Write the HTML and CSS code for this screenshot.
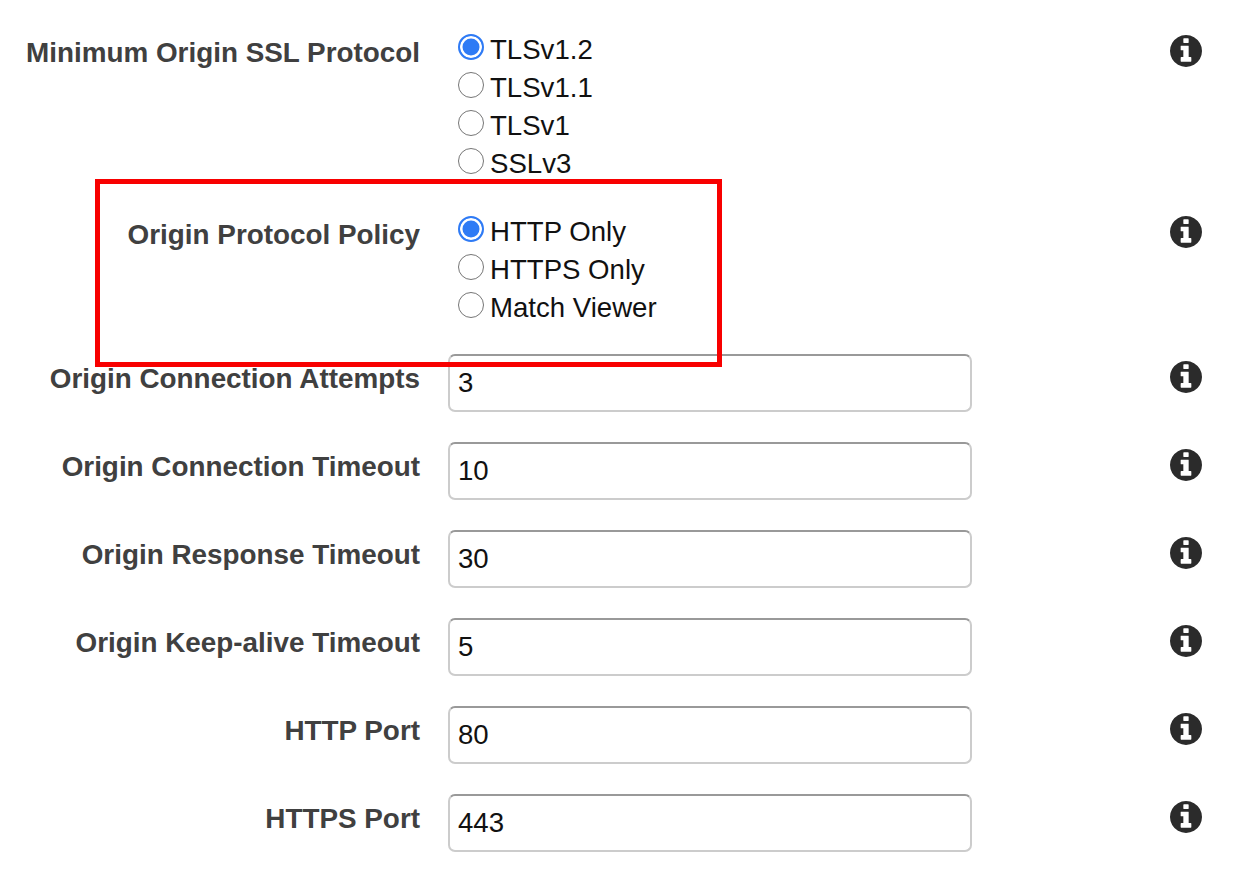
FILE: index.html
```html
<!DOCTYPE html>
<html lang="en">
<head>
	<meta charset="UTF-8">
	<title>Origin Settings</title>
	<link rel="stylesheet" href="styles.css">
</head>
<body>
	<svg class="defs" width="0" height="0">
		<symbol id="info" viewBox="128 128 1536 1536">
			<path d="M1152 1376v-160q0-14-9-23t-23-9h-96v-512q0-14-9-23t-23-9h-320q-14 0-23 9t-9 23v160q0 14 9 23t23 9h96v320h-96q-14 0-23 9t-9 23v160q0 14 9 23t23 9h448q14 0 23-9t9-23zm-128-896v-160q0-14-9-23t-23-9h-192q-14 0-23 9t-9 23v160q0 14 9 23t23 9h192q14 0 23-9t9-23zm640 416q0 209-103 385.5t-279.5 279.5-385.5 103-385.5-103-279.5-279.5-103-385.5 103-385.5 279.5-279.5 385.5-103 385.5 103 279.5 279.5 103 385.5z"/>
		</symbol>
	</svg>

	<form class="settings">
		<div class="row radio-row first">
			<label class="name">Minimum Origin SSL Protocol</label>
			<div class="options">
				<label class="option"><input type="radio" name="ssl" checked>TLSv1.2</label>
				<label class="option"><input type="radio" name="ssl">TLSv1.1</label>
				<label class="option"><input type="radio" name="ssl">TLSv1</label>
				<label class="option"><input type="radio" name="ssl">SSLv3</label>
			</div>
			<svg class="info"><use href="#info"></use></svg>
		</div>
		<div class="row radio-row">
			<label class="name">Origin Protocol Policy</label>
			<div class="options">
				<label class="option"><input type="radio" name="policy" checked>HTTP Only</label>
				<label class="option"><input type="radio" name="policy">HTTPS Only</label>
				<label class="option"><input type="radio" name="policy">Match Viewer</label>
			</div>
			<svg class="info"><use href="#info"></use></svg>
		</div>
		<div class="row input-row">
			<label class="name">Origin Connection Attempts</label>
			<input class="field" type="text" value="3">
			<svg class="info"><use href="#info"></use></svg>
		</div>
		<div class="row input-row">
			<label class="name">Origin Connection Timeout</label>
			<input class="field" type="text" value="10">
			<svg class="info"><use href="#info"></use></svg>
		</div>
		<div class="row input-row">
			<label class="name">Origin Response Timeout</label>
			<input class="field" type="text" value="30">
			<svg class="info"><use href="#info"></use></svg>
		</div>
		<div class="row input-row">
			<label class="name">Origin Keep-alive Timeout</label>
			<input class="field" type="text" value="5">
			<svg class="info"><use href="#info"></use></svg>
		</div>
		<div class="row input-row">
			<label class="name">HTTP Port</label>
			<input class="field" type="text" value="80">
			<svg class="info"><use href="#info"></use></svg>
		</div>
		<div class="row input-row">
			<label class="name">HTTPS Port</label>
			<input class="field" type="text" value="443">
			<svg class="info"><use href="#info"></use></svg>
		</div>
	</form>

	<div class="highlight"></div>
</body>
</html>
```

FILE: styles.css
```css
body {
	margin: 0;
	background-color: #fff;
	font-family: "Liberation Sans", Arial, sans-serif;
	overflow: hidden;
}
.defs {
	position: absolute;
}
.settings {
	padding-top: 31px;
}
.row {
	display: grid;
	grid-template-columns: 420px 524px 1fr;
	column-gap: 28px;
	align-items: start;
}
.radio-row {
	margin-bottom: 27px;
}
.radio-row.first {
	margin-bottom: 30px;
}
.input-row {
	margin-bottom: 30px;
}
.name {
	color: #404040;
	font-size: 27.85px;
	font-weight: bold;
	line-height: 38px;
	text-align: right;
	white-space: nowrap;
}
.radio-row .name {
	padding-top: 3px;
}
.input-row .name {
	margin-top: 6px;
}
.options {
	padding-left: 10px;
}
.option {
	display: flex;
	align-items: center;
	height: 38px;
	color: #111;
	font-size: 27.6px;
}
.option input {
	appearance: none;
	box-sizing: border-box;
	width: 26px;
	height: 26px;
	margin: -6px 6px 0 0;
	background-color: #fff;
	border: 1.5px solid #767676;
	border-radius: 50%;
}
.option input:checked {
	background-color: #2f7bf5;
	border: 2px solid #2f7bf5;
	box-shadow: inset 0 0 0 2.5px #fff;
}
.field {
	box-sizing: border-box;
	width: 524px;
	height: 58px;
	padding: 0 8px;
	background-color: #fff;
	border: 2px solid #ccc;
	border-top-color: #999;
	border-radius: 7px;
	color: #111;
	font-family: inherit;
	font-size: 27.6px;
	outline: none;
}
.info {
	justify-self: end;
	width: 32px;
	height: 32px;
	margin: 4px 34px 0 0;
	fill: #2b2b2b;
}
.radio-row + .radio-row .info {
	margin-top: 3px;
}
.input-row .info {
	margin-top: 7px;
}
.highlight {
	position: absolute;
	left: 95px;
	top: 179px;
	box-sizing: border-box;
	width: 627px;
	height: 188px;
	border: 5px solid #f80000;
}
```
